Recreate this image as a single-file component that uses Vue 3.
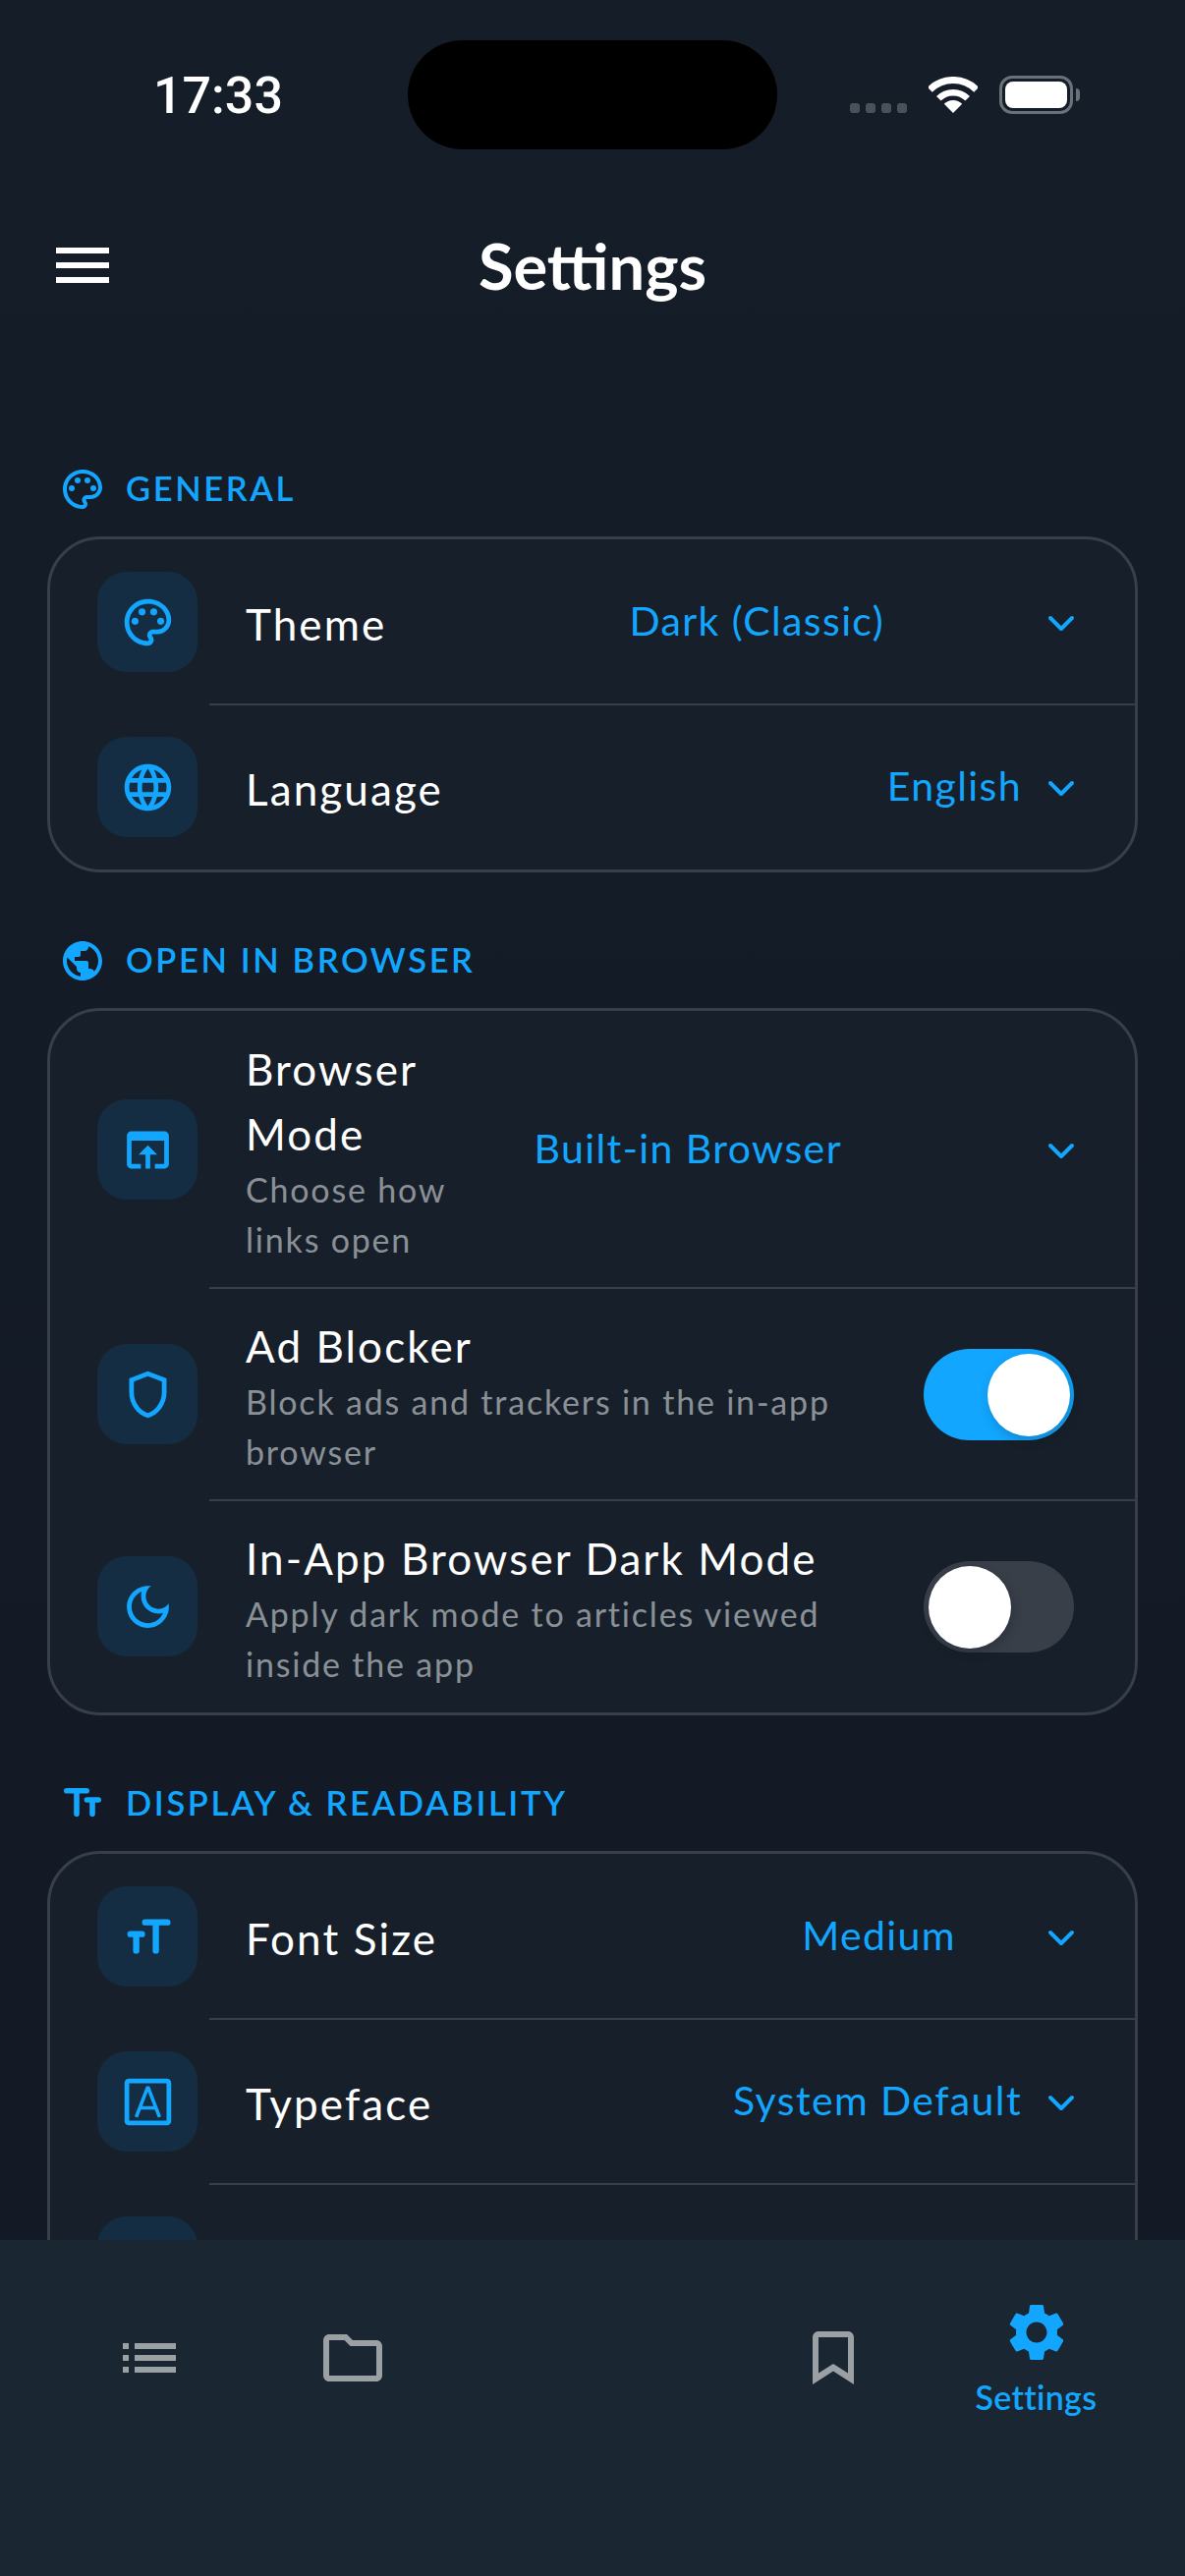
<template>
  <div class="screen">
    <div class="status">
      <span class="time">17:33</span>
      <div class="island"></div>
      <div class="status-icons">
        <div class="dots"><i></i><i></i><i></i><i></i></div>
        <svg class="wifi" width="50" height="37" viewBox="0 0 50 37">
          <path d="M25 37 L15.8 27.8 A13 13 0 0 1 34.2 27.8 Z" fill="#fff" />
          <path d="M10.3 22.3 A20.75 20.75 0 0 1 39.7 22.3" fill="none" stroke="#fff" stroke-width="6.5" />
          <path d="M1.3 13.3 A33.5 33.5 0 0 1 48.7 13.3" fill="none" stroke="#fff" stroke-width="7" />
        </svg>
        <div class="battery"><div class="battery-fill"></div></div>
      </div>
    </div>

    <header class="topbar">
      <div class="burger"><i></i><i></i><i></i></div>
      <h1>Settings</h1>
    </header>

    <main class="content">
      <section v-for="section in sections" :key="section.title" class="section">
        <div class="section-label">
          <svg v-if="section.icon === 'tt'" class="section-icon" viewBox="0 0 24 24">
            <path d="M3.9 5.4H14.1M9 5.4V17.1M14.2 10h5.9M17 10v7.1" fill="none" stroke="#12a6ff" stroke-width="2.8" stroke-linecap="round" />
          </svg>
          <svg v-else class="section-icon" viewBox="0 0 24 24">
            <path :d="icons[section.icon]" fill="#12a6ff" />
            <template v-if="section.icon === 'palette'">
              <circle v-for="d in paletteDots" :key="d[0]" :cx="d[0]" :cy="d[1]" r="1.5" fill="#12a6ff" />
            </template>
          </svg>
          <span>{{ section.title }}</span>
        </div>

        <div class="card">
          <div v-for="(row, i) in section.rows" :key="i" class="row" :class="{ divided: i > 0 }">
            <div class="icon-box">
              <svg v-if="row.icon === 'fontsize'" class="row-icon" viewBox="0 0 24 24">
                <path d="M10.85 5.75h9.5M15.4 5.75v12.1M4.55 10.8h4.9M7 10.8v7.05" fill="none" stroke="#12a6ff" stroke-width="2.7" stroke-linecap="round" />
              </svg>
              <svg v-else-if="row.icon === 'typeface'" class="row-icon" viewBox="0 0 24 24">
                <rect x="3" y="3" width="18" height="18" rx="0.8" fill="none" stroke="#12a6ff" stroke-width="2" />
                <path d="M7 18.5 11.8 6h.4L17 18.5M8.8 14.5h6.4" fill="none" stroke="#12a6ff" stroke-width="1.5" />
              </svg>
              <svg v-else-if="row.icon" class="row-icon" viewBox="0 0 24 24">
                <path :d="icons[row.icon]" fill="#12a6ff" />
                <template v-if="row.icon === 'palette'">
                  <circle v-for="d in paletteDots" :key="d[0]" :cx="d[0]" :cy="d[1]" r="1.5" fill="#12a6ff" />
                </template>
              </svg>
            </div>
            <div class="row-text">
              <div class="row-title">{{ row.title }}</div>
              <div v-if="row.sub" class="row-sub">{{ row.sub }}</div>
            </div>
            <div v-if="row.value" class="picker" :style="{ gap: row.gap + 'px' }">
              <span>{{ row.value }}</span>
              <svg class="chevron" width="30" height="20" viewBox="0 0 30 20">
                <path d="M4 4 15 15 26 4" fill="none" stroke="#12a6ff" stroke-width="4" stroke-linecap="round" stroke-linejoin="round" />
              </svg>
            </div>
            <div v-if="row.toggle !== undefined" class="toggle" :class="{ on: row.toggle }">
              <div class="knob"></div>
            </div>
          </div>
        </div>
      </section>
    </main>

    <nav class="tabs">
      <div class="tab">
        <svg width="72" height="72" viewBox="0 0 24 24"><path :d="icons.list" fill="#9aa0a4" /></svg>
      </div>
      <div class="tab">
        <svg width="72" height="72" viewBox="0 0 24 24"><path :d="icons.folder" fill="#9aa0a4" /></svg>
      </div>
      <div class="tab-gap"></div>
      <div class="tab">
        <svg width="72" height="72" viewBox="0 0 24 24"><path :d="icons.bookmark" fill="#9aa0a4" /></svg>
      </div>
      <div class="tab active">
        <svg width="70" height="70" viewBox="0 0 24 24"><path :d="icons.gear" fill="#12a6ff" /></svg>
        <span>Settings</span>
      </div>
    </nav>
  </div>
</template>

<script setup>
const paletteDots = [[6.5, 11.5], [9.5, 7.5], [14.5, 7.5], [17.5, 11.5]]

const icons = {
  palette: 'M12 22C6.49 22 2 17.51 2 12S6.49 2 12 2s10 4.04 10 9c0 3.31-2.69 6-6 6h-1.77c-.28 0-.5.22-.5.5 0 .12.05.23.13.33.41.47.64 1.06.64 1.67 0 1.38-1.12 2.5-2.5 2.5zm0-18c-4.41 0-8 3.59-8 8s3.59 8 8 8c.28 0 .5-.22.5-.5 0-.16-.08-.28-.14-.35-.41-.46-.63-1.05-.63-1.65 0-1.38 1.12-2.5 2.5-2.5H16c2.21 0 4-1.79 4-4 0-3.86-3.59-7-8-7z',
  language: 'M11.99 2C6.47 2 2 6.48 2 12s4.47 10 9.99 10C17.52 22 22 17.52 22 12S17.52 2 11.99 2zm6.93 6h-2.95c-.32-1.25-.78-2.45-1.38-3.56 1.84.63 3.37 1.91 4.33 3.56zM12 4.04c.83 1.2 1.48 2.53 1.91 3.96h-3.82c.43-1.43 1.08-2.76 1.91-3.96zM4.26 14C4.1 13.36 4 12.69 4 12s.1-1.36.26-2h3.38c-.08.66-.14 1.32-.14 2s.06 1.34.14 2H4.26zm.82 2h2.95c.32 1.25.78 2.45 1.38 3.56-1.84-.63-3.37-1.9-4.33-3.56zm2.95-8H5.08c.96-1.66 2.49-2.93 4.33-3.56C8.81 5.55 8.35 6.75 8.03 8zM12 19.96c-.83-1.2-1.48-2.53-1.91-3.96h3.82c-.43 1.43-1.08 2.76-1.91 3.96zM14.34 14H9.66c-.09-.66-.16-1.32-.16-2s.07-1.35.16-2h4.68c.09.65.16 1.32.16 2s-.07 1.34-.16 2zm.25 5.56c.6-1.11 1.06-2.31 1.38-3.56h2.95c-.96 1.65-2.49 2.93-4.33 3.56zM16.36 14c.08-.66.14-1.32.14-2s-.06-1.34-.14-2h3.38c.16.64.26 1.31.26 2s-.1 1.36-.26 2h-3.38z',
  earth: 'M12 2C6.48 2 2 6.48 2 12s4.48 10 10 10 10-4.48 10-10S17.52 2 12 2zm-1 17.93c-3.95-.49-7-3.85-7-7.93 0-.62.08-1.21.21-1.79L9 15v1c0 1.1.9 2 2 2v1.93zm6.9-2.54c-.26-.81-1-1.39-1.9-1.39h-1v-3c0-.55-.45-1-1-1H8v-2h2c.55 0 1-.45 1-1V7h2c1.1 0 2-.9 2-2v-.41c2.93 1.19 5 4.06 5 7.41 0 2.08-.8 3.97-2.1 5.39z',
  browser: 'M19 4H5c-1.11 0-2 .9-2 2v12c0 1.1.89 2 2 2h4v-2H5V8h14v10h-4v2h4c1.1 0 2-.9 2-2V6c0-1.1-.9-2-2-2zm-7 6l-4 4h3v6h2v-6h3l-4-4z',
  shield: 'M12 2 4 5v6.09c0 5.05 3.41 9.76 8 10.91 4.59-1.15 8-5.86 8-10.91V5l-8-3zm6 9.09c0 4-2.55 7.7-6 8.83-3.45-1.13-6-4.82-6-8.83v-4.7l6-2.25 6 2.25v4.7z',
  moon: 'M9.37 5.51c-.18.64-.27 1.31-.27 1.99 0 4.08 3.32 7.4 7.4 7.4.68 0 1.35-.09 1.99-.27C17.45 17.19 14.93 19 12 19c-3.86 0-7-3.14-7-7 0-2.93 1.81-5.45 4.37-6.49zM12 3c-4.97 0-9 4.03-9 9s4.03 9 9 9 9-4.03 9-9c0-.46-.04-.92-.1-1.36-.98 1.37-2.58 2.26-4.4 2.26-2.98 0-5.4-2.42-5.4-5.4 0-1.81.89-3.42 2.26-4.4-.44-.06-.9-.1-1.36-.1z',
  list: 'M3 13h2v-2H3v2zm0 4h2v-2H3v2zm0-8h2V7H3v2zm4 4h14v-2H7v2zm0 4h14v-2H7v2zM7 7v2h14V7H7z',
  folder: 'M9.17 6l2 2H20v10H4V6h5.17M10 4H4c-1.1 0-1.99.9-1.99 2L2 18c0 1.1.9 2 2 2h16c1.1 0 2-.9 2-2V8c0-1.1-.9-2-2-2h-8l-2-2z',
  bookmark: 'M17 3H7c-1.1 0-2 .9-2 2v16l7-4.5 7 4.5V5c0-1.1-.9-2-2-2zm0 14.2-5-3.2-5 3.2V5h10v12.2z',
  gear: 'M19.14 12.94c.04-.3.06-.61.06-.94 0-.32-.02-.64-.07-.94l2.03-1.58c.18-.14.23-.41.12-.61l-1.92-3.32c-.12-.22-.37-.29-.59-.22l-2.39.96c-.5-.38-1.03-.7-1.62-.94l-.36-2.54c-.04-.24-.24-.41-.48-.41h-3.84c-.24 0-.43.17-.47.41l-.36 2.54c-.59.24-1.13.57-1.62.94l-2.39-.96c-.22-.08-.47 0-.59.22L2.74 8.87c-.12.21-.08.47.12.61l2.03 1.58c-.05.3-.09.63-.09.94s.02.64.07.94l-2.03 1.58c-.18.14-.23.41-.12.61l1.92 3.32c.12.22.37.29.59.22l2.39-.96c.5.38 1.03.7 1.62.94l.36 2.54c.05.24.24.41.48.41h3.84c.24 0 .44-.17.47-.41l.36-2.54c.59-.24 1.13-.56 1.62-.94l2.39.96c.22.08.47 0 .59-.22l1.92-3.32c.12-.22.07-.47-.12-.61l-2.01-1.58zM12 15.6c-1.98 0-3.6-1.62-3.6-3.6s1.62-3.6 3.6-3.6 3.6 1.62 3.6 3.6-1.62 3.6-3.6 3.6z'
}

const sections = [
  {
    title: 'GENERAL',
    icon: 'palette',
    rows: [
      { icon: 'palette', title: 'Theme', value: 'Dark (Classic)', gap: 165 },
      { icon: 'language', title: 'Language', value: 'English', gap: 25 }
    ]
  },
  {
    title: 'OPEN IN BROWSER',
    icon: 'earth',
    rows: [
      { icon: 'browser', title: 'Browser\nMode', sub: 'Choose how\nlinks open', value: 'Built-in Browser', gap: 208 },
      { icon: 'shield', title: 'Ad Blocker', sub: 'Block ads and trackers in the in-app\nbrowser', toggle: true },
      { icon: 'moon', title: 'In-App Browser Dark Mode', sub: 'Apply dark mode to articles viewed\ninside the app', toggle: false }
    ]
  },
  {
    title: 'DISPLAY & READABILITY',
    icon: 'tt',
    rows: [
      { icon: 'fontsize', title: 'Font Size', value: 'Medium', gap: 92 },
      { icon: 'typeface', title: 'Typeface', value: 'System Default', gap: 25 },
      { icon: '', title: '' }
    ]
  }
]
</script>

<style scoped>
.screen {
  width: 1206px;
  height: 2622px;
  display: flex;
  flex-direction: column;
  overflow: hidden;
  background: linear-gradient(#151d28, #121925);
  font-family: Lato, "Noto Sans", sans-serif;
  color: #fff;
}

.status {
  height: 111px;
  padding-top: 41px;
  display: flex;
  align-items: center;
  position: relative;
  flex: none;
}
.time {
  margin-left: 156px;
  margin-top: 2px;
  font-family: Roboto, sans-serif;
  font-weight: 500;
  font-size: 52px;
  width: 259px;
}
.island {
  width: 376px;
  height: 111px;
  border-radius: 56px;
  background: #000;
}
.status-icons {
  margin-left: 74px;
  display: flex;
  align-items: center;
}
.dots {
  display: flex;
  gap: 5.5px;
  margin-top: 26px;
  width: 58px;
}
.dots i {
  width: 10.5px;
  height: 10px;
  border-radius: 3px;
  background: #4b5158;
}
.wifi {
  margin-left: 22px;
}
.battery {
  margin-left: 22px;
  width: 75px;
  height: 39px;
  box-sizing: border-box;
  border: 3px solid #6b7179;
  border-radius: 13px;
  padding: 3px;
  position: relative;
}
.battery::after {
  content: "";
  position: absolute;
  right: -10px;
  top: 10px;
  width: 4px;
  height: 13px;
  border-radius: 0 4px 4px 0;
  background: #6b7179;
}
.battery-fill {
  height: 100%;
  border-radius: 8px;
  background: #fff;
}

.topbar {
  height: 236px;
  flex: none;
  display: flex;
  align-items: center;
  justify-content: center;
  position: relative;
}
.topbar h1 {
  margin: 0;
  font-size: 65px;
  font-weight: 700;
  letter-spacing: 0;
}
.burger {
  position: absolute;
  left: 57px;
  top: 100px;
  display: flex;
  flex-direction: column;
  gap: 9px;
}
.burger i {
  width: 54px;
  height: 6px;
  background: #fff;
}

.content {
  flex: 1;
  min-height: 0;
  padding: 20px 48px 0;
  overflow: hidden;
}
.section {
  margin-top: 66px;
}
.section-label {
  height: 48px;
  margin-bottom: 24px;
  margin-left: 16px;
  display: flex;
  align-items: center;
  color: #12a6ff;
  font-size: 34.5px;
  font-weight: 600;
  letter-spacing: 2.6px;
}
.section-label span {
  margin-bottom: 3px;
}
.section-icon {
  width: 48px;
  height: 48px;
  margin-left: -4px;
  margin-right: 20px;
  flex: none;
}
.card {
  box-sizing: border-box;
  border: 3px solid #383f49;
  border-radius: 54px;
  background: #17202a;
  overflow: hidden;
}
.row {
  box-sizing: border-box;
  min-height: 168px;
  padding: 24px 60px 24px 48px;
  display: flex;
  align-items: center;
  position: relative;
}
.row.divided::before {
  content: "";
  position: absolute;
  left: 162px;
  right: 0;
  top: -1px;
  height: 2px;
  background: #383f49;
}
.icon-box {
  width: 102px;
  height: 102px;
  border-radius: 30px;
  background: #152d43;
  flex: none;
  display: flex;
  align-items: center;
  justify-content: center;
}
.row-icon {
  width: 57px;
  height: 57px;
}
.row-text {
  margin-left: 49px;
  flex: 1;
  min-width: 0;
}
.row-title {
  font-size: 44px;
  line-height: 66px;
  letter-spacing: 2.1px;
  margin-top: 2px;
  margin-bottom: -2px;
  white-space: pre-line;
}
.row-sub {
  font-size: 34px;
  line-height: 51px;
  letter-spacing: 1.8px;
  color: #8a9096;
  white-space: pre-line;
}
.picker {
  display: flex;
  align-items: center;
  color: #12a6ff;
  font-size: 41px;
  letter-spacing: 1.4px;
  white-space: nowrap;
}
.picker span {
  margin-bottom: 3px;
}
.chevron {
  flex: none;
  margin-top: 3px;
}
.toggle {
  width: 153px;
  height: 93px;
  border-radius: 47px;
  background: #383f49;
  flex: none;
  position: relative;
  margin-right: 2px;
}
.toggle.on {
  background: #12a6ff;
}
.knob {
  position: absolute;
  left: 5px;
  top: 5px;
  width: 84px;
  height: 84px;
  border-radius: 50%;
  background: #fff;
  box-shadow: 2px 4px 12px rgba(0, 0, 0, 0.2);
}
.toggle.on .knob {
  left: 65px;
}

.tabs {
  height: 342px;
  flex: none;
  box-sizing: border-box;
  padding: 0 48px 102px;
  background: #1a2631;
  display: flex;
  position: relative;
}
.tab {
  width: 207px;
  display: flex;
  flex-direction: column;
  align-items: center;
  justify-content: center;
}
.tab-gap {
  flex: 1;
}
.tab.active {
  color: #12a6ff;
  font-size: 34px;
  font-weight: 600;
  gap: 10px;
  letter-spacing: 0.3px;
  padding-bottom: 2px;
}
</style>

<style>
body {
  background: #131a26;
}
</style>
